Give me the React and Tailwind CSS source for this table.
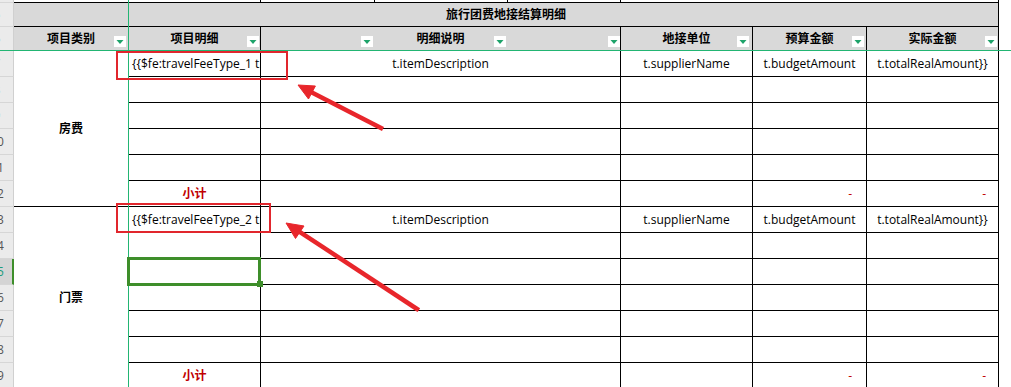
import React from "react";

const GREEN_FREEZE = "bg-[#22b573]";

function FilterButton({ pos }) {
  return (
    <span className={`absolute bottom-[3px] flex h-[11px] w-[12px] items-center justify-center bg-white ${pos}`}>
      <svg width="12" height="11" viewBox="0 0 12 11">
        <polygon points="2.5,4 9.5,4 6,8" fill="#1fa36a" />
      </svg>
    </span>
  );
}

const rowHeaders = [
  { n: 4, h: "h-[3px]", hideLabel: true },
  { n: 5, h: "h-[24px]" },
  { n: 6, h: "h-[24px]" },
  ...Array.from({ length: 13 }, (_, i) => ({ n: 7 + i, h: "h-[26px]" })),
];

function RowHeader() {
  return (
    <div className="flex w-[14px] shrink-0 flex-col">
      {rowHeaders.map(({ n, h, hideLabel }) => {
        const active = n === 15;
        return (
          <div
            key={n}
            className={`flex ${h} w-[14px] shrink-0 items-center overflow-hidden border-b border-[#d6d6d6] ${
              active
                ? "border-r-2 border-r-[#3e8e2a] bg-[#d4d4d4] text-[#1e9c7c]"
                : "border-r border-r-[#d0d0d0] bg-[#ebebeb] text-[#555555]"
            }`}
          >
            {!hideLabel && (
              <span className="ml-[-18px] w-[30px] shrink-0 text-center text-[12px] leading-none">{n}</span>
            )}
          </div>
        );
      })}
    </div>
  );
}

const cell = "flex items-center overflow-hidden whitespace-nowrap border-b border-r border-black text-[12px]";
const head = "relative flex items-center justify-center border-b border-r border-black bg-[#d9d9d9] text-[12px] font-bold text-black";

function ItemRow({ type }) {
  return (
    <>
      <div className={`${cell} justify-start pl-[3px] text-black`}>{`{{$fe:travelFeeType_${type} t.itemName`}</div>
      <div className={`${cell} col-span-3 justify-center text-black`}>t.itemDescription</div>
      <div className={`${cell} justify-center text-black`}>t.supplierName</div>
      <div className={`${cell} justify-center text-black`}>t.budgetAmount</div>
      <div className={`${cell} justify-center text-black`}>t.totalRealAmount{"}}"}</div>
    </>
  );
}

function EmptyRow() {
  return (
    <>
      <div className={cell} />
      <div className={`${cell} col-span-3`} />
      <div className={cell} />
      <div className={cell} />
      <div className={cell} />
    </>
  );
}

function SubtotalRow() {
  return (
    <>
      <div className={`${cell} justify-center font-bold text-[#c00000]`}>小计</div>
      <div className={`${cell} col-span-3`} />
      <div className={cell} />
      <div className={`${cell} justify-end pr-[14px] text-[#c00000]`}>-</div>
      <div className={`${cell} justify-end pr-[12px] text-[#c00000]`}>-</div>
    </>
  );
}

export default function App() {
  return (
    <div className="relative h-[387px] w-[1011px] overflow-hidden bg-white font-['Open_Sans','Noto_Sans_CJK_SC',sans-serif]">
      <div className="flex">
        <RowHeader />
        <div className="grid grid-cols-[115px_132px_114px_133px_113px_132px_114px_132px] grid-rows-[3px_24px_24px_repeat(13,26px)]">
          {/* sliver of the row above the title */}
          <div className="border-b border-black" />
          <div className="border-b border-r border-black" />
          <div className="border-b border-r border-black" />
          <div className="border-b border-r border-black" />
          <div className="border-b border-r border-black" />
          <div className="col-span-3 border-b border-r border-black" />

          {/* title */}
          <div className={`${head} col-span-8`}>旅行团费地接结算明细</div>

          {/* column headers */}
          <div className={head}>
            项目类别
            <FilterButton pos="right-[2px]" />
          </div>
          <div className={head}>
            项目明细
            <FilterButton pos="right-[1px]" />
          </div>
          <div className={`${head} col-span-3`}>
            明细说明
            <FilterButton pos="left-[100px]" />
            <FilterButton pos="left-[233px]" />
            <FilterButton pos="left-[347px]" />
          </div>
          <div className={head}>
            地接单位
            <FilterButton pos="right-[3px]" />
          </div>
          <div className={head}>
            预算金额
            <FilterButton pos="right-[2px]" />
          </div>
          <div className={head}>
            实际金额
            <FilterButton pos="right-[1px]" />
          </div>

          {/* category cells */}
          <div className="col-start-1 row-span-6 row-start-4 flex items-center justify-center border-b border-r border-black text-[12px] font-bold text-black">
            房费
          </div>
          <div className="col-start-1 row-span-7 row-start-10 flex items-center justify-center border-r border-black text-[12px] font-bold text-black">
            门票
          </div>

          <ItemRow type={1} />
          <EmptyRow />
          <EmptyRow />
          <EmptyRow />
          <EmptyRow />
          <SubtotalRow />

          <ItemRow type={2} />
          <EmptyRow />
          <EmptyRow />
          <EmptyRow />
          <EmptyRow />
          <EmptyRow />
          <SubtotalRow />
        </div>
      </div>

      {/* frozen pane lines */}
      <div className={`absolute left-[128px] top-0 h-[387px] w-px ${GREEN_FREEZE}`} />
      <div className={`absolute left-0 top-[50px] h-px w-[1011px] ${GREEN_FREEZE}`} />

      {/* active cell */}
      <div className="absolute left-[127px] top-[257px] h-[29px] w-[134px] border-[3px] border-[#3e8e2a]" />
      <div className="absolute left-[257px] top-[281px] h-[6px] w-[6px] bg-[#3e8e2a]" />

      {/* callouts */}
      <div className="absolute left-[116px] top-[51px] h-[29px] w-[172px] border-2 border-[#e1262d]" />
      <div className="absolute left-[116px] top-[203px] h-[30px] w-[155px] border-2 border-[#e1262d]" />
      <svg className="pointer-events-none absolute left-0 top-0" width="1011" height="387" viewBox="0 0 1011 387">
        <g fill="#e8262b" stroke="#e8262b">
          <line x1="381" y1="128" x2="310" y2="91.5" strokeWidth="4.5" strokeLinecap="square" />
          <polygon points="298,85 315.4,86 308.5,99" strokeWidth="1" strokeLinejoin="round" />
          <line x1="417" y1="309" x2="298.5" y2="231" strokeWidth="4.5" strokeLinecap="square" />
          <polygon points="286,223 304,226 295.5,238.5" strokeWidth="1" strokeLinejoin="round" />
        </g>
      </svg>
    </div>
  );
}
